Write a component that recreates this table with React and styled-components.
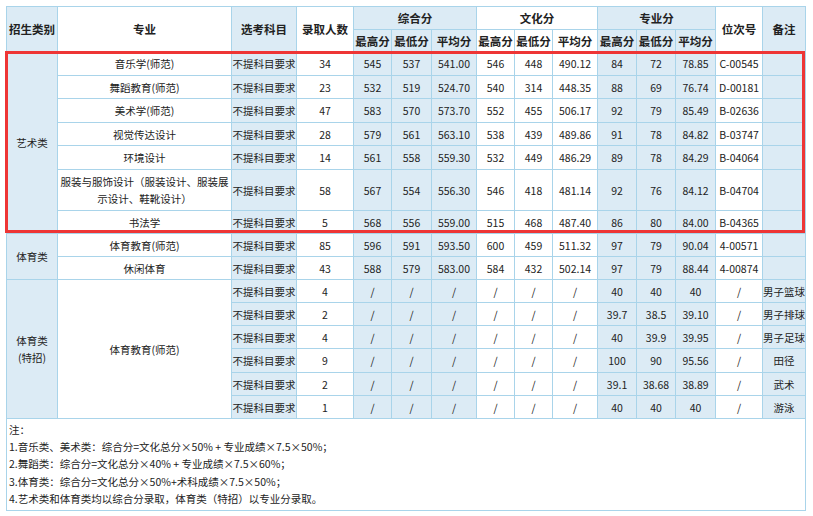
import React from "react";
import styled, { createGlobalStyle } from "styled-components";

const Global = createGlobalStyle`
  html, body { margin: 0; padding: 0; background: #fff; }
  body { font-family: "Microsoft YaHei", "Noto Sans CJK SC", "Noto Sans", sans-serif; color: #222; }
`;

const BLUE = "#dcebf5";
const LINE = "#a9d4ea";

const Page = styled.div`
  padding: 6px 0 0 6px;
`;

const Frame = styled.div`
  position: relative;
  width: 800px;
`;

const Table = styled.table`
  border-collapse: collapse;
  table-layout: fixed;
  width: 800px;
  font-size: 10.5px;
  border: 1px solid ${LINE};
`;

const Row = styled.tr`
  height: ${(p) => p.$h || 23}px;
`;

const Th = styled.th`
  border: 1px solid ${LINE};
  background: ${(p) => (p.$blue ? BLUE : "#fff")};
  font-weight: bold;
  font-size: 11.5px;
  padding: 0;
  text-align: center;
  vertical-align: middle;
  white-space: nowrap;
  color: #222;
`;

const Td = styled.td`
  border: 1px solid ${LINE};
  background: ${(p) => (p.$blue ? BLUE : "#fff")};
  padding: 0;
  text-align: center;
  vertical-align: middle;
  line-height: 17px;
  white-space: ${(p) => (p.$wrap ? "normal" : "nowrap")};
  overflow: hidden;
`;

const NoteCell = styled.td`
  border: 1px solid ${LINE};
  padding: 2px 2px 3px 2px;
  text-align: left;
  vertical-align: top;
  line-height: 17.2px;
  font-size: 10.5px;
`;

const NoteLine = styled.div`
  white-space: nowrap;
`;

const Highlight = styled.div`
  position: absolute;
  left: -1px;
  top: 45px;
  width: 800px;
  height: 182px;
  border: 3px solid #ee3535;
  box-sizing: border-box;
  pointer-events: none;
`;

const widths = [51, 174, 65, 57, 38, 40, 45, 38, 38, 45, 39, 39, 40, 47, 43];
// shading pattern for the 15 columns
const shade = [true, false, true, false, true, true, true, false, false, false, true, true, true, false, true];

const NA = "不提科目要求";

const artRows = [
  ["音乐学(师范)", 34, 545, 537, "541.00", 546, 448, "490.12", 84, 72, "78.85", "C-00545", 24],
  ["舞蹈教育(师范)", 23, 532, 519, "524.70", 540, 314, "448.35", 88, 69, "76.74", "D-00181", 23],
  ["美术学(师范)", 47, 583, 570, "573.70", 552, 455, "506.17", 92, 79, "85.49", "B-02636", 24],
  ["视觉传达设计", 28, 579, 561, "563.10", 538, 439, "489.86", 91, 78, "84.82", "B-03747", 23],
  ["环境设计", 14, 561, 558, "559.30", 532, 449, "486.29", 89, 78, "84.29", "B-04064", 24],
  ["服装与服饰设计（服装设计、服装展示设计、鞋靴设计）", 58, 567, 554, "556.30", 546, 418, "481.14", 92, 76, "84.12", "B-04704", 41],
  ["书法学", 5, 568, 556, "559.00", 515, 468, "487.40", 86, 80, "84.00", "B-04365", 23],
];

const sportRows = [
  ["体育教育(师范)", 85, 596, 591, "593.50", 600, 459, "511.32", 97, 79, "90.04", "4-00571"],
  ["休闲体育", 43, 588, 579, "583.00", 584, 432, "502.14", 97, 79, "88.44", "4-00874"],
];

const specialRows = [
  [4, "40", "40", "40", "男子篮球", 23],
  [2, "39.7", "38.5", "39.10", "男子排球", 23],
  [4, "40", "39.9", "39.95", "男子足球", 23],
  [9, "100", "90", "95.56", "田径", 24],
  [2, "39.1", "38.68", "38.89", "武术", 23],
  [1, "40", "40", "40", "游泳", 23],
];

function Cells({ values, from }) {
  return values.map((v, i) => (
    <Td key={i} $blue={shade[from + i]}>
      {v}
    </Td>
  ));
}

export default function App() {
  return (
    <Page>
      <Global />
      <Frame>
        <Table>
          <colgroup>
            {widths.map((w, i) => (
              <col key={i} style={{ width: w }} />
            ))}
          </colgroup>
          <thead>
            <Row $h={23}>
              <Th $blue rowSpan={2}>招生类别</Th>
              <Th rowSpan={2}>专业</Th>
              <Th $blue rowSpan={2}>选考科目</Th>
              <Th rowSpan={2}>录取人数</Th>
              <Th $blue colSpan={3}>综合分</Th>
              <Th colSpan={3}>文化分</Th>
              <Th $blue colSpan={3}>专业分</Th>
              <Th rowSpan={2}>位次号</Th>
              <Th $blue rowSpan={2}>备注</Th>
            </Row>
            <Row $h={22}>
              <Th $blue>最高分</Th>
              <Th $blue>最低分</Th>
              <Th $blue>平均分</Th>
              <Th>最高分</Th>
              <Th>最低分</Th>
              <Th>平均分</Th>
              <Th $blue>最高分</Th>
              <Th $blue>最低分</Th>
              <Th $blue>平均分</Th>
            </Row>
          </thead>
          <tbody>
            {artRows.map((r, idx) => (
              <Row key={r[0]} $h={r[12]}>
                {idx === 0 && (
                  <Td $blue rowSpan={artRows.length}>艺术类</Td>
                )}
                <Td $wrap={r[12] > 30}>{r[0]}</Td>
                <Td $blue>{NA}</Td>
                <Cells values={r.slice(1, 12)} from={3} />
                <Td $blue />
              </Row>
            ))}
            {sportRows.map((r, idx) => (
              <Row key={r[0]} $h={23}>
                {idx === 0 && (
                  <Td $blue rowSpan={sportRows.length}>体育类</Td>
                )}
                <Td>{r[0]}</Td>
                <Td $blue>{NA}</Td>
                <Cells values={r.slice(1, 12)} from={3} />
                <Td $blue />
              </Row>
            ))}
            {specialRows.map((r, idx) => (
              <Row key={r[4]} $h={r[5]}>
                {idx === 0 && (
                  <>
                    <Td $blue rowSpan={specialRows.length}>
                      体育类
                      <br />
                      (特招)
                    </Td>
                    <Td rowSpan={specialRows.length}>体育教育(师范)</Td>
                  </>
                )}
                <Td $blue>{NA}</Td>
                <Cells
                  values={[r[0], "/", "/", "/", "/", "/", "/", r[1], r[2], r[3], "/", r[4]]}
                  from={3}
                />
              </Row>
            ))}
            <tr>
              <NoteCell colSpan={15}>
                <NoteLine>注：</NoteLine>
                <NoteLine>1.音乐类、美术类：综合分=文化总分×50% + 专业成绩×7.5×50%；</NoteLine>
                <NoteLine>2.舞蹈类：综合分=文化总分×40% + 专业成绩×7.5×60%；</NoteLine>
                <NoteLine>3.体育类：综合分=文化总分×50%+术科成绩×7.5×50%；</NoteLine>
                <NoteLine>4.艺术类和体育类均以综合分录取，体育类（特招）以专业分录取。</NoteLine>
              </NoteCell>
            </tr>
          </tbody>
        </Table>
        <Highlight />
      </Frame>
    </Page>
  );
}
